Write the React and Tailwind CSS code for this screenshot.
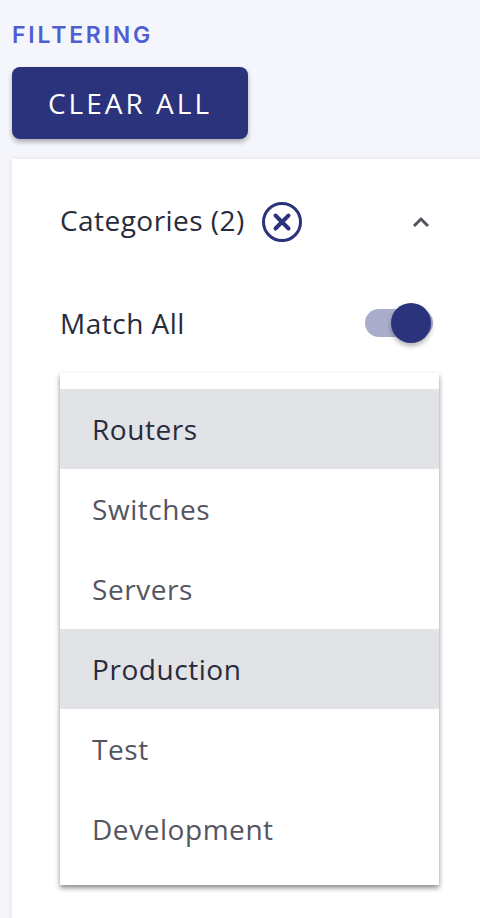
import React from "react";

const items = [
  ["Routers", true],
  ["Switches", false],
  ["Servers", false],
  ["Production", true],
  ["Test", false],
  ["Development", false],
];

export default function App() {
  return (
    <div className="h-[918px] w-[480px] overflow-hidden bg-[#f5f6fc] pl-3 pt-[22px] font-['Open_Sans',sans-serif]">
      <div className="h-[26px] font-['Inter',sans-serif] text-[23px] font-semibold leading-[26px] tracking-[2.8px] text-[#4d5fd3]">
        FILTERING
      </div>
      <button className="mt-[19px] flex h-[72px] w-[236px] items-center justify-center rounded-lg bg-[#2a337c] text-[28px] font-medium tracking-[3px] text-white shadow-[0_3px_5px_rgba(0,0,0,0.3)]">
        CLEAR ALL
      </button>
      <div className="mt-5 h-[800px] bg-white pl-12 pr-[47px] shadow-[0_0_6px_rgba(0,0,0,0.08)]">
        <div className="flex h-[144px] items-start justify-between pt-[38px]">
          <div className="flex items-center">
            <span className="text-[28px] leading-[46px] tracking-[0.45px] text-[#282b3b]">Categories (2)</span>
            <svg className="ml-[17px] mt-[4px]" width="40" height="40" viewBox="0 0 40 40" fill="none" stroke="#2a337c">
              <circle cx="20" cy="20" r="18.5" strokeWidth="3" />
              <path d="M13.5 13.5L26.5 26.5M26.5 13.5L13.5 26.5" strokeWidth="4" strokeLinecap="round" />
            </svg>
          </div>
          <svg className="mr-[2px] mt-[14px]" width="20" height="20" viewBox="0 0 20 20" fill="none" stroke="#54555f" strokeWidth="3">
            <path d="M3 15L10 8L17 15" />
          </svg>
        </div>
        <div className="flex h-[40px] items-center justify-between">
          <span className="text-[28px] tracking-[0.5px] text-[#282b3b]">Match All</span>
          <div className="relative h-7 w-[68px] rounded-full bg-[#a9adcb]">
            <div className="absolute right-[2px] -top-[6px] h-10 w-10 rounded-full bg-[#2a337c] shadow-[0_3px_5px_rgba(0,0,0,0.3)]" />
          </div>
        </div>
        <div className="mt-[30px] w-[379px] bg-white py-4 shadow-[0_3px_5px_rgba(0,0,0,0.45)]">
          {items.map(([label, selected]) => (
            <div
              key={label}
              className={`flex h-20 items-center pl-8 text-[28px] tracking-[0.55px] ${
                selected ? "bg-[#e2e3e7] text-[#282b3b]" : "text-[#54555f]"
              }`}
            >
              {label}
            </div>
          ))}
        </div>
      </div>
    </div>
  );
}
